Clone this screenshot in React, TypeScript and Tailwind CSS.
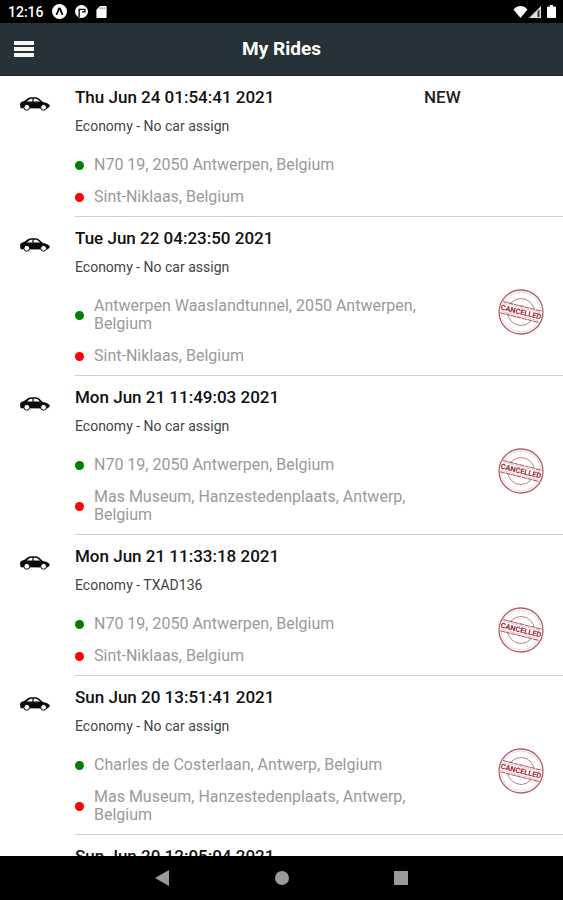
interface Ride {
  date: string
  car: string
  pickup: string
  drop: string
  status: 'new' | 'cancelled'
}

const rides: Ride[] = [
  {
    date: 'Thu Jun 24 01:54:41 2021',
    car: 'No car assign',
    pickup: 'N70 19, 2050 Antwerpen, Belgium',
    drop: 'Sint-Niklaas, Belgium',
    status: 'new',
  },
  {
    date: 'Tue Jun 22 04:23:50 2021',
    car: 'No car assign',
    pickup: 'Antwerpen Waaslandtunnel, 2050 Antwerpen, Belgium',
    drop: 'Sint-Niklaas, Belgium',
    status: 'cancelled',
  },
  {
    date: 'Mon Jun 21 11:49:03 2021',
    car: 'No car assign',
    pickup: 'N70 19, 2050 Antwerpen, Belgium',
    drop: 'Mas Museum, Hanzestedenplaats, Antwerp, Belgium',
    status: 'cancelled',
  },
  {
    date: 'Mon Jun 21 11:33:18 2021',
    car: 'TXAD136',
    pickup: 'N70 19, 2050 Antwerpen, Belgium',
    drop: 'Sint-Niklaas, Belgium',
    status: 'cancelled',
  },
  {
    date: 'Sun Jun 20 13:51:41 2021',
    car: 'No car assign',
    pickup: 'Charles de Costerlaan, Antwerp, Belgium',
    drop: 'Mas Museum, Hanzestedenplaats, Antwerp, Belgium',
    status: 'cancelled',
  },
  {
    date: 'Sun Jun 20 12:05:04 2021',
    car: 'No car assign',
    pickup: 'N70 19, 2050 Antwerpen, Belgium',
    drop: 'Sint-Niklaas, Belgium',
    status: 'cancelled',
  },
]

function CarIcon() {
  return (
    <svg viewBox="0 0 30 14" className="h-[14px] w-[30px]" aria-hidden="true">
      <path
        d="M.6 11.200 0 7.500C.3 5.400 1.800 4.400 4 4L7.800 1.200C8.800.600 10 .300 11.600.300h3.300c2.100 0 3.500.6 4.700 1.700l3.100 3c3.500.6 5.900 1.700 7.300 3.700l-1.800 2.300-1.400.4z"
        fill="#0a0a0a"
      />
      <path d="M7 4.600 9.200 2.400c.6-.5 1.400-.7 2.400-.7h.8v2.900zM13.600 1.700h1.400c1.500 0 2.500.4 3.400 1.200l1.700 1.700h-6.500z" fill="#fff" />
      <circle cx="6.800" cy="10.300" r="2.900" fill="#fff" stroke="#0a0a0a" strokeWidth="1" />
      <circle cx="23.600" cy="10.300" r="2.900" fill="#fff" stroke="#0a0a0a" strokeWidth="1" />
    </svg>
  )
}

function CancelledStamp() {
  return (
    <svg viewBox="0 0 46 46" className="size-[46px]" role="img" aria-label="Cancelled">
      <g fill="none" stroke="#b0606a">
        <circle cx="23" cy="23" r="22" strokeWidth="1.300" />
        <circle cx="23" cy="23" r="19.800" strokeWidth=".5" opacity=".5" />
        <circle cx="23" cy="23" r="13.500" strokeWidth="1" opacity=".8" />
      </g>
      <g transform="rotate(14 23 23)">
        <rect x="3" y="17" width="40" height="12" fill="#fff" />
        <g stroke="#b0606a">
          <path d="M3 17.200h40M3 28.800h40" strokeWidth="1.100" strokeDasharray="5 .6" />
          <path d="M4 18.800h38M4 27.200h38" strokeWidth=".5" opacity=".6" />
        </g>
        <text
          x="23"
          y="25.600"
          textAnchor="middle"
          fontSize="7.500"
          fontWeight="700"
          fill="#a0222f"
          className="font-['Roboto',sans-serif]"
        >
          CANCELLED
        </text>
      </g>
    </svg>
  )
}

function StatusBar() {
  return (
    <div className="flex h-[23px] shrink-0 items-center justify-between bg-black pr-[7px] pl-2 text-white">
      <div className="flex items-center gap-2">
        <span className="text-sm leading-5 font-medium">12:16</span>
        <svg viewBox="0 0 14 14" className="size-[15px]" aria-hidden="true">
          <circle cx="7" cy="7" r="7" fill="#fff" />
          <path d="M4 10c1-1.500 1.800-3.500 2.300-5.300.3-.9 1.100-.9 1.400 0C8.200 6.500 9 8.500 10 10" fill="none" stroke="#000" strokeWidth="1.700" />
        </svg>
        <svg viewBox="0 0 14 14" className="size-[13px]" aria-hidden="true">
          <circle cx="7" cy="7" r="7" fill="#fff" />
          <path d="M4.500 13V4.700h6.200v2.800H7.500" fill="none" stroke="#000" strokeWidth="1.400" />
        </svg>
        <svg viewBox="0 0 11 13" className="h-[12px] w-[11px]" aria-hidden="true">
          <path d="M4 0h6a1 1 0 0 1 1 1v11a1 1 0 0 1-1 1H1a1 1 0 0 1-1-1V4z" fill="#fff" />
          <path d="M4 1.500v2M6.200 1.500v2M8.400 1.500v2" stroke="#000" strokeWidth=".6" />
        </svg>
      </div>
      <div className="flex items-center gap-px">
        <svg viewBox="0 0 14 12" className="h-[12px] w-[15px]" aria-hidden="true">
          <path d="M0 3.500C4-1.100 10-1.100 14 3.500L7 12z" fill="#fff" />
        </svg>
        <svg viewBox="0 0 12 12" className="size-3" aria-hidden="true">
          <path d="M0 12 12 0v12z" fill="#ddd" />
          <path d="M8.500 5v6h2V3.500" fill="#333" />
        </svg>
        <svg viewBox="0 0 9 13" className="ml-[5px] h-[13px] w-[9px]" aria-hidden="true">
          <path d="M3 0h3v1.500h2a1 1 0 0 1 1 1V12a1 1 0 0 1-1 1H1a1 1 0 0 1-1-1V2.500a1 1 0 0 1 1-1h2z" fill="#fff" />
        </svg>
      </div>
    </div>
  )
}

function Header() {
  return (
    <header className="grid h-[53px] shrink-0 grid-cols-[1fr_auto_1fr] items-center border-b border-[#14252a] bg-[#263238] px-[14px]">
      <button type="button" aria-label="Open menu" className="flex w-5 flex-col gap-0.5">
        <span className="h-1 w-full bg-[#f5f5f5]" />
        <span className="h-1 w-full bg-[#f5f5f5]" />
        <span className="h-1 w-full bg-[#f5f5f5]" />
      </button>
      <h1 className="text-[19px] leading-6 font-bold text-white">My Rides</h1>
    </header>
  )
}

function Address({ dot, children }: { dot: string; children: string }) {
  return (
    <div className="flex items-center gap-[10px]">
      <span className={`size-[9px] shrink-0 rounded-full ${dot}`} />
      <p className="text-base leading-[18px] text-[#9a9a9a]">{children}</p>
    </div>
  )
}

function RideRow({ ride }: { ride: Ride }) {
  return (
    <li className="flex">
      <div className="w-[75px] shrink-0 pt-[21px] pl-5">
        <CarIcon />
      </div>
      <div className="flex min-w-0 flex-1 border-b border-[#cfcfcf]">
        <div className="min-w-0 flex-1 pt-[11px] pb-[10px]">
          <h2 className="text-[17px] leading-5 font-medium text-[#111]">{ride.date}</h2>
          <p className="mt-[11px] text-sm leading-4 text-[#444]">Economy - {ride.car}</p>
          <div className="mt-[22px] flex flex-col gap-[14px]">
            <Address dot="bg-[#008000]">{ride.pickup}</Address>
            <Address dot="bg-[#ff0000]">{ride.drop}</Address>
          </div>
        </div>
        <div className="w-[139px] shrink-0 pt-[11px] pr-[19px]">
          {ride.status === 'new' ? (
            <span className="block text-[17px] leading-5 font-medium text-[#222]">NEW</span>
          ) : (
            <div className="flex justify-end pt-[61px]">
              <CancelledStamp />
            </div>
          )}
        </div>
      </div>
    </li>
  )
}

function NavBar() {
  return (
    <nav className="flex h-11 shrink-0 items-center justify-center gap-[105px] bg-black">
      <button type="button" aria-label="Back">
        <svg viewBox="0 0 15 16" className="h-4 w-[15px]">
          <path d="M0 8 14 0v16z" fill="#9b9b9b" />
        </svg>
      </button>
      <button type="button" aria-label="Home" className="size-[14px] rounded-full bg-[#9b9b9b]" />
      <button type="button" aria-label="Recent apps" className="size-[14px] bg-[#9b9b9b]" />
    </nav>
  )
}

export default function App() {
  return (
    <div className="flex h-screen flex-col bg-white font-['Roboto',sans-serif]">
      <StatusBar />
      <Header />
      <main className="min-h-0 flex-1 overflow-hidden">
        <ul>
          {rides.map((ride) => (
            <RideRow key={ride.date} ride={ride} />
          ))}
        </ul>
      </main>
      <NavBar />
    </div>
  )
}
